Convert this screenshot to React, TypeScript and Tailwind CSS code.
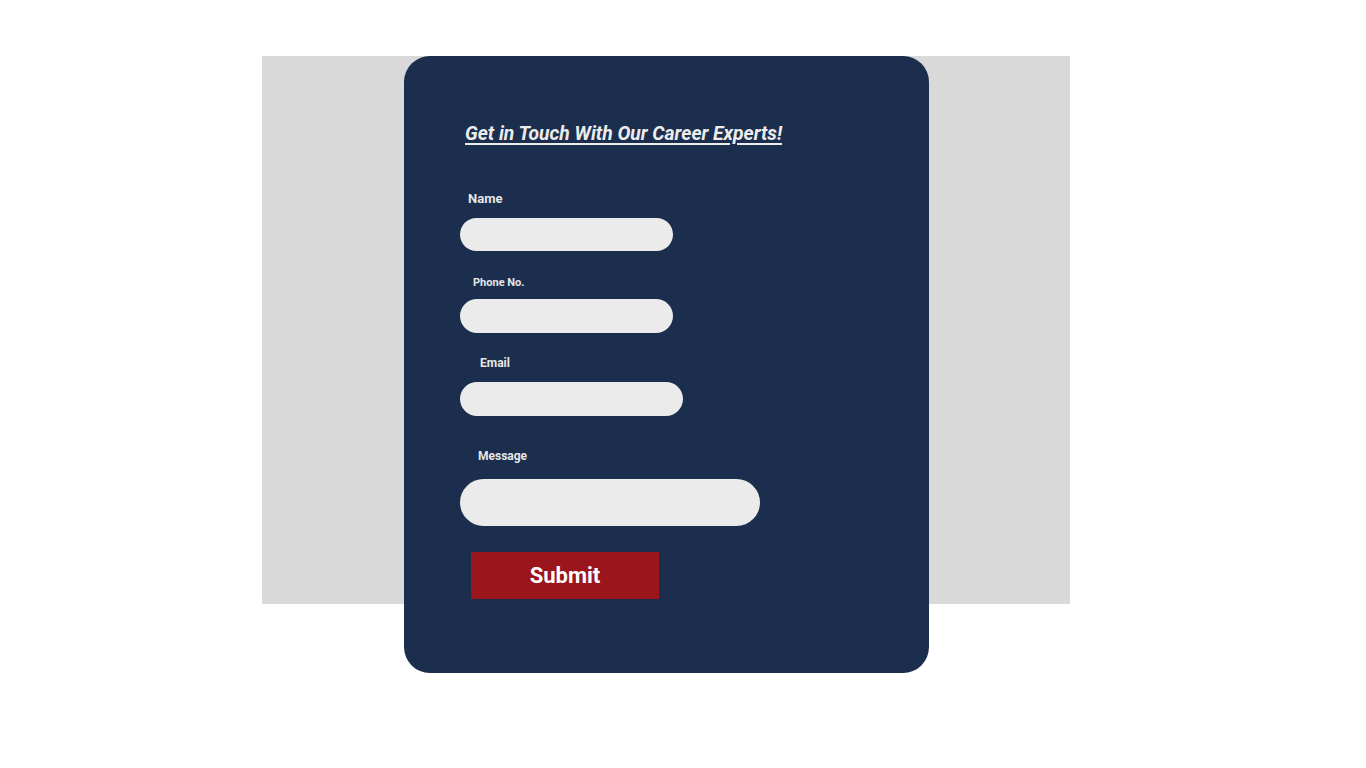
import React from "react";

export default function App() {
  const font = { fontFamily: "Roboto, 'Liberation Sans', sans-serif" };
  return (
    <div className="min-h-[768px] w-[1366px] bg-white" style={font}>
      <div className="grid pt-[56px] pl-[262px]">
        <div className="col-start-1 row-start-1 h-[548px] w-[808px] bg-[#d9d9d9]" />
        <div className="col-start-1 row-start-1 ml-[142px] flex h-[617px] w-[525px] flex-col rounded-[26px] bg-[#1b2e4e] pl-[56px] pt-[66px]">
          <h1 className="ml-[5px] text-[19.3px] leading-[24px] font-bold italic text-[#ececec] underline decoration-[1.5px] underline-offset-[3px]">
            Get in Touch With Our Career Experts!
          </h1>

          <label className="mt-[45px] ml-[8px] text-[13px] leading-[16px] font-bold text-[#e6e6e6]">Name</label>
          <input className="mt-[11px] h-[33px] w-[213px] rounded-full border-0 bg-[#ebebeb] outline-none" />

          <label className="mt-[25px] ml-[13px] text-[11px] leading-[14px] font-bold text-[#e6e6e6]">Phone No.</label>
          <input className="mt-[9px] h-[34px] w-[213px] rounded-full border-0 bg-[#ebebeb] outline-none" />

          <label className="mt-[23px] ml-[20px] text-[12px] leading-[15px] font-bold text-[#e6e6e6]">Email</label>
          <input className="mt-[11px] h-[34px] w-[223px] rounded-full border-0 bg-[#ebebeb] outline-none" />

          <label className="mt-[33px] ml-[18px] text-[12px] leading-[15px] font-bold text-[#e6e6e6]">Message</label>
          <input className="mt-[15px] h-[47px] w-[300px] rounded-full border-0 bg-[#ebebeb] outline-none" />

          <button className="mt-[26px] ml-[11px] flex h-[47px] w-[188px] items-center justify-center bg-[#9b151c] text-[22px] font-bold text-white">
            Submit
          </button>
        </div>
      </div>
    </div>
  );
}
